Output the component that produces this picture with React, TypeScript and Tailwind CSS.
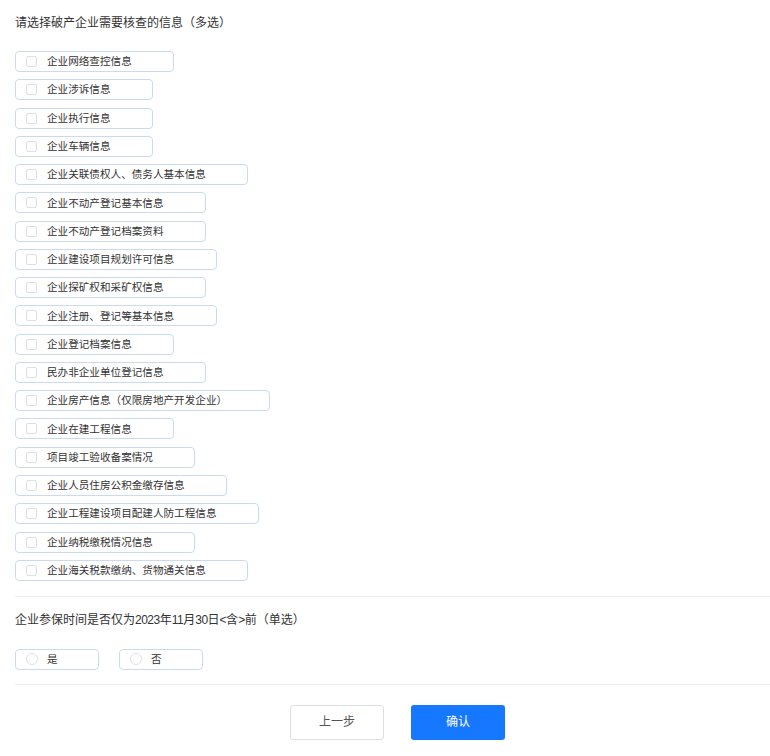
const items = [
  '企业网络查控信息',
  '企业涉诉信息',
  '企业执行信息',
  '企业车辆信息',
  '企业关联债权人、债务人基本信息',
  '企业不动产登记基本信息',
  '企业不动产登记档案资料',
  '企业建设项目规划许可信息',
  '企业探矿权和采矿权信息',
  '企业注册、登记等基本信息',
  '企业登记档案信息',
  '民办非企业单位登记信息',
  '企业房产信息（仅限房地产开发企业）',
  '企业在建工程信息',
  '项目竣工验收备案情况',
  '企业人员住房公积金缴存信息',
  '企业工程建设项目配建人防工程信息',
  '企业纳税缴税情况信息',
  '企业海关税款缴纳、货物通关信息',
];

function CheckItem({ label }: { label: string }) {
  return (
    <label className="flex h-[21px] w-fit items-center rounded-[4px] border border-[#cbdaf3] bg-white pl-[10px] pr-[41.5px]">
      <span className="h-[11px] w-[11px] rounded-[2px] border border-[#dcdfe6] bg-white" />
      <span className="ml-[10px] text-[10.6px] leading-none text-[#333]">{label}</span>
    </label>
  );
}

function RadioItem({ label }: { label: string }) {
  return (
    <label className="flex h-[21px] w-[84px] items-center rounded-[4px] border border-[#cbdaf3] bg-white pl-[10px]">
      <span className="h-[12px] w-[12px] rounded-full border border-[#dcdfe6] bg-white" />
      <span className="ml-[9px] text-[10.6px] leading-none text-[#333]">{label}</span>
    </label>
  );
}

// digits in the second question are set tighter
const Num = ({ children }: { children: React.ReactNode }) => (
  <span className="tracking-[-0.5px]">{children}</span>
);

export default function App() {
  return (
    <div
      className="min-h-screen w-[770px] bg-white pl-[15px] text-[#333]"
      style={{ fontFamily: '"Liberation Sans", "Noto Sans CJK SC", sans-serif' }}
    >
      {/* question 1 */}
      <h2 className="pt-[13px] text-[12px] leading-[20px] font-normal">
        请选择破产企业需要核查的信息（多选）
      </h2>
      <div className="mt-[18px] flex flex-col gap-[7.28px]">
        {items.map((it) => (
          <CheckItem key={it} label={it} />
        ))}
      </div>

      <div className="mt-[15px] border-t border-[#ececec]" />

      {/* question 2 */}
      <h2 className="mt-[13px] text-[12px] leading-[20px] font-normal">
        企业参保时间是否仅为<Num>2023</Num>年<Num>11</Num>月<Num>30</Num>日<Num>&lt;</Num>含<Num>&gt;</Num>前（单选）
      </h2>
      <div className="mt-[19px] flex gap-[20px]">
        <RadioItem label="是" />
        <RadioItem label="否" />
      </div>

      <div className="mt-[14px] border-t border-[#ececec]" />

      {/* actions */}
      <div className="mt-[20px] flex justify-center gap-[27px] pl-[10px]">
        <button className="h-[35px] w-[94px] rounded-[3px] border border-[#dcdfe6] bg-white text-[12px] text-[#555]">
          上一步
        </button>
        <button className="h-[35px] w-[94px] rounded-[3px] bg-[#1677ff] text-[12px] text-white">
          确认
        </button>
      </div>
    </div>
  );
}
